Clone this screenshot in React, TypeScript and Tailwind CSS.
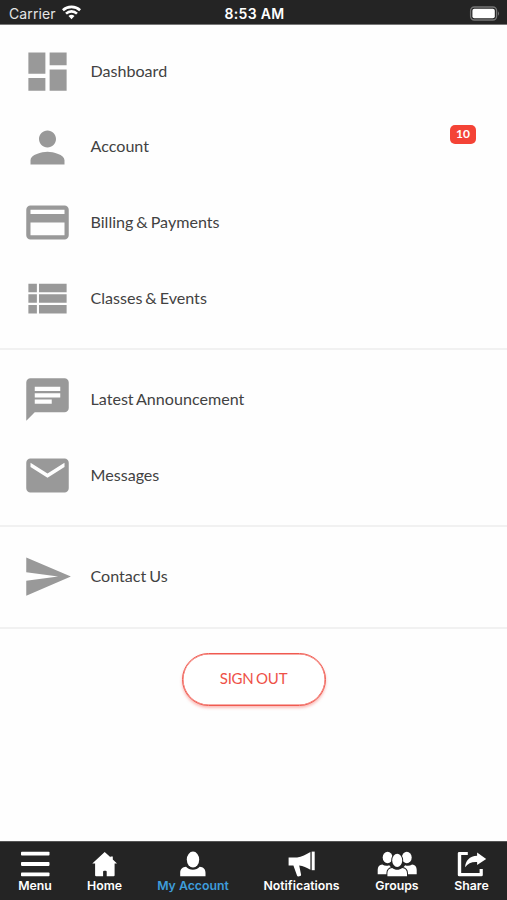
import type { ReactNode } from 'react';
import type { IconType } from 'react-icons';
import { MdChat, MdCreditCard, MdDashboard, MdEmail, MdPerson, MdSend } from 'react-icons/md';

interface MenuItem {
  label: string;
  icon: IconType;
  badge?: number;
}

interface Tab {
  label: string;
  icon: ReactNode;
  width: string;
  active?: boolean;
}

const ListIcon: IconType = ({ className }) => (
  <svg viewBox="0 0 24 24" fill="currentColor" className={className}>
    <path d="M3 14h4v-4H3v4zm0 5h4v-4H3v4zM3 9h4V5H3v4zm5 5h13v-4H8v4zm0 5h13v-4H8v4zM8 5v4h13V5H8z" />
  </svg>
);

const SECTIONS: MenuItem[][] = [
  [
    { label: 'Dashboard', icon: MdDashboard },
    { label: 'Account', icon: MdPerson, badge: 10 },
    { label: 'Billing & Payments', icon: MdCreditCard },
    { label: 'Classes & Events', icon: ListIcon },
  ],
  [
    { label: 'Latest Announcement', icon: MdChat },
    { label: 'Messages', icon: MdEmail },
  ],
  [{ label: 'Contact Us', icon: MdSend }],
];

const TABS: Tab[] = [
  {
    label: 'Menu',
    width: 'w-[70px]',
    icon: (
      <svg width="30" height="26" viewBox="0 0 30 26" fill="currentColor">
        <rect x="1" y="0.7" width="28.5" height="3.8" rx="0.8" />
        <rect x="1" y="11.1" width="28.5" height="3.8" rx="0.8" />
        <rect x="1" y="21.5" width="28.5" height="3.8" rx="0.8" />
      </svg>
    ),
  },
  {
    label: 'Home',
    width: 'w-[69px]',
    icon: (
      <svg width="26" height="26" viewBox="0 0 26 26" fill="currentColor">
        <path d="M12.7.9 18.5 6.2V5.4h2.3v3.2l4.2 3.8H22.6V24.2q0 1-1 1H14.7v-4.4q0-1-1-1h-1.6q-1 0-1 1v4.4H4.1q-1 0-1-1V12.4H.3z" />
      </svg>
    ),
  },
  {
    label: 'My Account',
    width: 'w-[108px]',
    active: true,
    icon: (
      <svg width="26" height="26" viewBox="0 0 26 26" fill="currentColor">
        <ellipse cx="13" cy="8.6" rx="6.2" ry="8" />
        <path d="M.2 25.3v-3.6c0-3.5 2.4-5.6 5.8-5.9 1.8 2 4.2 2.9 6.9 2.9s5.1-.9 6.8-2.9c3.5.3 5.8 2.4 5.8 5.9v3.6z" />
      </svg>
    ),
  },
  {
    label: 'Notifications',
    width: 'w-[109px]',
    icon: (
      <svg width="28" height="26" viewBox="0 0 28 26" fill="currentColor">
        <path d="M.6 6.5h8.5C13.6 6.2 18.2 3.5 22.4 1v17.8c-3.8-2-7.3-3.9-11.2-4.2l1.9 9.2q.2 1-.8 1.3l-2 .4q-.9.1-1.2-.8L5.4 14.4H.6z" />
        <path d="M23.7.6h3v18.6h-3z" />
      </svg>
    ),
  },
  {
    label: 'Groups',
    width: 'w-[82px]',
    icon: (
      <svg width="40" height="26" viewBox="0 0 40 26" fill="currentColor">
        <ellipse cx="10.6" cy="6.5" rx="4.9" ry="5.8" />
        <ellipse cx="29.8" cy="6.5" rx="4.9" ry="5.8" />
        <path d="M.7 23.3v-4.5c0-3.2 1.7-5.1 4.6-5.3 2.2 1.4 4.6 1.7 6.9.7l3 3.5-5 5.6zM39.7 23.3v-4.5c0-3.2-1.7-5.1-4.6-5.3-2.2 1.4-4.6 1.7-6.9.7l-3 3.5 5 5.6z" />
        <g className="stroke-[#242424]" strokeWidth="2" paintOrder="stroke">
          <path d="M10.4 25.3v-3c0-3.2 1.8-5.1 4.8-5.4 3 2.4 7 2.4 10 0 3 .3 4.8 2.2 4.8 5.4v3z" />
          <ellipse cx="20.2" cy="9.4" rx="5" ry="6.6" />
        </g>
      </svg>
    ),
  },
  {
    label: 'Share',
    width: 'w-[67px]',
    icon: (
      <svg width="30" height="26" viewBox="0 0 30 26" fill="currentColor">
        <path d="M.8 2.3Q.8.9 2.2.9h8.6V4H4.2v18h18.4v-4h3.2v5.9q0 1.4-1.4 1.4H2.2q-1.4 0-1.4-1.4z" />
        <path d="M20.1 1.5 29.2 7.9l-9.1 6.2V11c-5.2-.4-9.2 1.2-12 5.2C8.6 9.6 12.4 5.2 20.1 4.8z" />
      </svg>
    ),
  },
];

function StatusBar() {
  return (
    <header className="grid h-[25px] shrink-0 grid-cols-3 items-center border-b border-[#777] bg-[#242424] pt-[3px] pr-[7px] pl-[9px] font-[Inter,sans-serif] text-white">
      <div className="flex items-center gap-1.5">
        <span className="text-[14px] leading-none tracking-[0.1px] text-[#e5e5e5]">Carrier</span>
        <svg className="mb-0.5" width="19" height="15" viewBox="0 0 19 15" fill="none" stroke="currentColor" strokeWidth="2.6">
          <path d="M.9 5.2C5.6.7 13.4.7 18.1 5.2" />
          <path d="M4 8.6C7.2 5.6 11.8 5.6 15 8.6" />
          <path d="M9.5 14.2 6.5 11.1Q9.5 8.4 12.5 11.1z" fill="currentColor" stroke="none" />
        </svg>
      </div>
      <span className="text-center text-[14px] leading-none font-semibold tracking-[0.3px] whitespace-nowrap">
        8:53 AM
      </span>
      <svg className="mb-px justify-self-end" width="31" height="15" viewBox="0 0 31 15">
        <rect x="1.6" y="1" width="26" height="13" rx="3.7" fill="#242424" stroke="#757575" strokeWidth="1.3" />
        <rect x="3.4" y="2.8" width="22.4" height="9.4" rx="2" fill="white" />
        <path d="M29 5.2q2 2.3 0 4.6z" fill="#757575" />
      </svg>
    </header>
  );
}

function MenuRow({ label, icon: Icon, badge }: MenuItem) {
  return (
    <button type="button" className="flex h-[75.75px] w-full items-center pr-[31px] pl-[22px] text-left">
      <Icon className="size-[51px] shrink-0 text-[#999]" />
      <span className="mb-px ml-[17.5px] text-[16.1px] text-[#424242] [word-spacing:-1.2px]">{label}</span>
      {badge !== undefined && (
        <span className="mb-[26px] ml-auto flex h-[19px] w-[26px] items-center justify-center rounded-[5px] bg-[#f44336] text-[12px] font-bold text-white">
          {badge}
        </span>
      )}
    </button>
  );
}

function TabBar() {
  return (
    <nav className="flex h-[59px] shrink-0 border-t border-[#555] bg-[#242424] font-[Inter,sans-serif]">
      {TABS.map((tab) => (
        <button
          key={tab.label}
          type="button"
          className={`${tab.width} flex shrink-0 flex-col items-center pt-[9px] text-white`}
        >
          {tab.icon}
          <span
            className={`mt-px text-[12.3px] leading-[15px] font-semibold whitespace-nowrap ${
              tab.active ? 'text-[#3e9ddb]' : 'text-white'
            }`}
          >
            {tab.label}
          </span>
        </button>
      ))}
    </nav>
  );
}

export default function App() {
  return (
    <div className="flex h-[900px] w-[507px] flex-col overflow-hidden bg-white font-[Lato,sans-serif]">
      <StatusBar />
      <main className="flex-1 bg-[#fefefe]">
        {SECTIONS.map((items, i) => (
          <section
            key={i}
            className={`border-b-2 border-[#f1f1f1] ${i === 0 ? 'pt-[8.4px] pb-[11.6px]' : 'pt-[11.5px] pb-[12.5px]'}`}
          >
            {items.map((item) => (
              <MenuRow key={item.label} {...item} />
            ))}
          </section>
        ))}
        <div className="flex justify-center pt-6">
          <button
            type="button"
            className="h-[53px] w-[144px] rounded-full border border-[#f05a50] bg-white pb-0.5 text-[15px] tracking-[-0.25px] text-[#ee5147] shadow-[inset_0_0_0_0.5px_#f05a50,0_2px_3px_rgba(244,67,54,0.35)] [word-spacing:-1px]"
          >
            SIGN OUT
          </button>
        </div>
      </main>
      <TabBar />
    </div>
  );
}
